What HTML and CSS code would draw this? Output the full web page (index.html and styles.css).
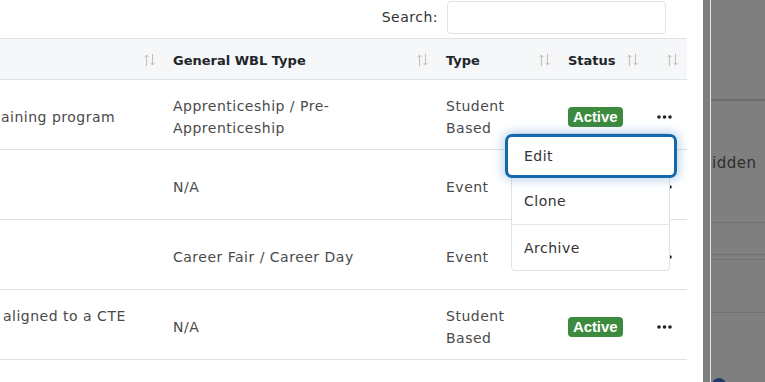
FILE: index.html
```html
<!DOCTYPE html>
<html lang="en">
<head>
  <meta charset="UTF-8" />
  <title>Work-Based Learning Opportunities</title>
  <link rel="stylesheet" href="styles.css">
</head>
<body>

  <div class="page">
    <div class="main">
      <div class="toolbar">
        <label for="search">Search:</label>
        <input type="search" id="search">
      </div>

      <table class="grid">
        <colgroup>
          <col class="c-desc"><col class="c-general"><col class="c-type"><col class="c-status"><col class="c-actions">
        </colgroup>
        <thead>
          <tr>
            <th><div class="th-in"><span></span><svg class="sort" viewBox="0 0 11 12"><path d="M2.5 12V1M0.5 3.2L2.5 1l2 2.2M8.5 0v11M6.5 8.8l2 2.2 2-2.2"/></svg></div></th>
            <th><div class="th-in"><span>General WBL Type</span><svg class="sort" viewBox="0 0 11 12"><path d="M2.5 12V1M0.5 3.2L2.5 1l2 2.2M8.5 0v11M6.5 8.8l2 2.2 2-2.2"/></svg></div></th>
            <th><div class="th-in"><span>Type</span><svg class="sort" viewBox="0 0 11 12"><path d="M2.5 12V1M0.5 3.2L2.5 1l2 2.2M8.5 0v11M6.5 8.8l2 2.2 2-2.2"/></svg></div></th>
            <th><div class="th-in"><span>Status</span><svg class="sort" viewBox="0 0 11 12"><path d="M2.5 12V1M0.5 3.2L2.5 1l2 2.2M8.5 0v11M6.5 8.8l2 2.2 2-2.2"/></svg></div></th>
            <th><div class="th-in"><span></span><svg class="sort" viewBox="0 0 11 12"><path d="M2.5 12V1M0.5 3.2L2.5 1l2 2.2M8.5 0v11M6.5 8.8l2 2.2 2-2.2"/></svg></div></th>
          </tr>
        </thead>
        <tbody>
          <tr>
            <td class="desc">aining program</td>
            <td>Apprenticeship / Pre-Apprenticeship</td>
            <td>Student Based</td>
            <td><span class="badge">Active</span></td>
            <td><button class="dots"><svg viewBox="0 0 15 4"><circle cx="2" cy="2" r="1.8"/><circle cx="7.5" cy="2" r="1.8"/><circle cx="13" cy="2" r="1.8"/></svg></button></td>
          </tr>
          <tr>
            <td class="desc"></td>
            <td>N/A</td>
            <td>Event</td>
            <td></td>
            <td><button class="dots"><svg viewBox="0 0 15 4"><circle cx="2" cy="2" r="1.8"/><circle cx="7.5" cy="2" r="1.8"/><circle cx="13" cy="2" r="1.8"/></svg></button></td>
          </tr>
          <tr>
            <td class="desc"></td>
            <td>Career Fair / Career Day</td>
            <td>Event</td>
            <td></td>
            <td><button class="dots"><svg viewBox="0 0 15 4"><circle cx="2" cy="2" r="1.8"/><circle cx="7.5" cy="2" r="1.8"/><circle cx="13" cy="2" r="1.8"/></svg></button></td>
          </tr>
          <tr>
            <td class="desc top">aligned to a CTE</td>
            <td>N/A</td>
            <td>Student Based</td>
            <td><span class="badge">Active</span></td>
            <td><button class="dots"><svg viewBox="0 0 15 4"><circle cx="2" cy="2" r="1.8"/><circle cx="7.5" cy="2" r="1.8"/><circle cx="13" cy="2" r="1.8"/></svg></button></td>
          </tr>
          <tr>
            <td></td><td></td><td></td><td></td><td></td>
          </tr>
        </tbody>
      </table>

      <!-- menu aperto dalla prima riga -->
      <ul class="menu">
        <li class="focused">Edit</li>
        <li>Clone</li>
        <li class="sep">Archive</li>
      </ul>
    </div>

    <div class="side">
      <div class="side-in">
        <div class="s-block s-top"></div>
        <div class="s-block s-name">idden</div>
        <div class="s-block s-a"></div>
        <div class="s-block s-b"></div>
        <div class="s-block s-c"></div>
        <div class="s-rest"><span class="s-dot"></span></div>
      </div>
    </div>
  </div>

</body>
</html>
```

FILE: styles.css
```css
* {
  box-sizing: border-box;
}
body {
  margin: 0;
  font-family: "DejaVu Sans", sans-serif;
  font-size: 14px;
  letter-spacing: 0.5px;
  color: #4a4a4a;
  background: #fff;
}
.page {
  display: flex;
  height: 382px;
  overflow: hidden;
}
.main {
  position: relative;
  width: 703px;
  flex: none;
}

.toolbar {
  height: 38px;
  display: flex;
  justify-content: flex-end;
  align-items: flex-start;
  gap: 9px;
  padding-right: 37px;
}
.toolbar label {
  margin-top: 9px;
  color: #333;
}
.toolbar input {
  width: 219px;
  height: 33px;
  margin-top: 1px;
  border: 1px solid #dfe3e8;
  border-radius: 4px;
  outline: none;
}

.grid {
  table-layout: fixed;
  border-collapse: collapse;
  width: 687px;
}
.c-desc { width: 160px; }
.c-general { width: 273px; }
.c-type { width: 122px; }
.c-status { width: 88px; }
.c-actions { width: 44px; }

.grid th {
  height: 41px;
  background: #f5f7f9;
  border-top: 1px solid #dee2e6;
  border-bottom: 1px solid #dee2e6;
  padding: 2px 5px 0 13px;
  text-align: left;
  font-size: 13px;
  font-weight: 600;
  letter-spacing: 0;
  color: #212529;
}
.th-in {
  display: flex;
  align-items: center;
  justify-content: space-between;
}
.sort {
  width: 11px;
  height: 12px;
  flex: none;
  fill: none;
  stroke: #bdbdbd;
  stroke-width: 1;
}
.grid th:last-child {
  padding-right: 9px;
}

.grid td {
  height: 70px;
  border-bottom: 1px solid #dee2e6;
  padding: 4px 13px 0;
  line-height: 22px;
  vertical-align: middle;
}
.grid td.desc {
  padding-left: 1px;
  white-space: nowrap;
}
.grid td.top {
  vertical-align: top;
  padding-top: 15px;
  padding-left: 3px;
}

.badge {
  display: inline-block;
  background: #3b8a3e;
  color: #fff;
  font-family: "Liberation Sans", Arial, sans-serif;
  font-weight: 700;
  font-size: 15px;
  line-height: 20px;
  padding: 0 6px 0 5px;
  border-radius: 4px;
  letter-spacing: -0.1px;
}
.dots {
  border: none;
  background: none;
  padding: 0;
  margin-left: 1px;
  width: 15px;
  height: 4px;
  display: block;
}
.dots svg {
  display: block;
  width: 15px;
  height: 4px;
  fill: #222;
}

.menu {
  position: absolute;
  left: 511px;
  top: 133px;
  width: 159px;
  margin: 0;
  padding: 0;
  list-style: none;
  background: #fff;
  border: 1px solid #dee2e6;
  border-radius: 4px;
  color: #333;
}
.menu li {
  height: 46px;
  line-height: 46px;
  padding-left: 12px;
}
.menu li.sep {
  border-top: 1px solid #e3e6ea;
}
.menu li.focused {
  position: relative;
  margin: 0 -8px 0 -7px;
  height: 44px;
  line-height: 38px;
  padding-left: 16px;
  border: 3px solid #1568aa;
  border-radius: 7px;
  background: #fff;
  box-shadow: 0 0 10px 3px rgba(90, 150, 210, 0.35);
}

.side {
  flex: 1;
  background: #7f7f7f;
  padding-left: 7px;
}
.side-in {
  height: 100%;
  border-left: 1px solid #e8e8e8;
  overflow: hidden;
}
.s-block {
  border-bottom: 1px solid #717171;
}
.s-top {
  height: 101px;
  border-bottom: 2px solid #6c6c6c;
}
.s-name {
  height: 122px;
  display: flex;
  align-items: center;
  padding: 3px 0 0 1px;
  color: #2e2e2e;
  font-size: 15px;
}
.s-a { height: 32px; }
.s-b { height: 5px; }
.s-c { height: 53px; }
.s-rest {
  position: relative;
  height: 80px;
}
.s-dot {
  position: absolute;
  left: 1px;
  top: 65px;
  width: 14px;
  height: 14px;
  border-radius: 50%;
  background: #1e3a6a;
}
```
